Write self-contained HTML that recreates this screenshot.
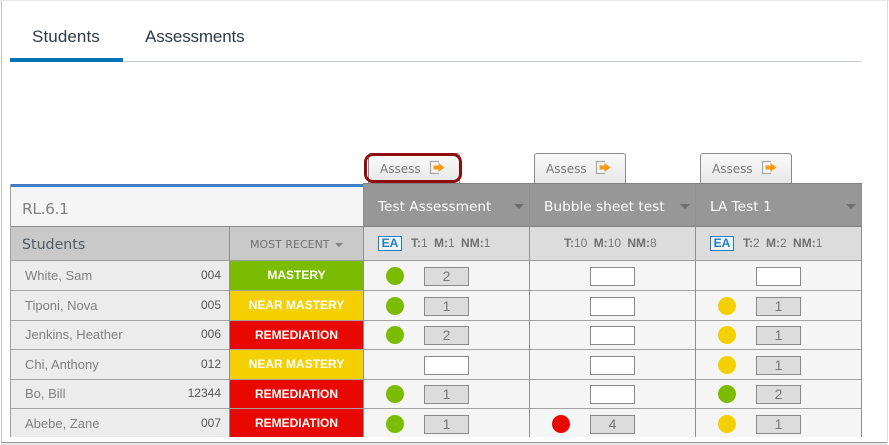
<!DOCTYPE html>
<html><head><meta charset="utf-8">
<style>
html,body{margin:0;padding:0;background:#fff}
#p{position:relative;width:889px;height:445px;overflow:hidden;background:#fff;font-family:"Liberation Sans",sans-serif}
#p div{position:absolute;box-sizing:border-box;white-space:nowrap}
.hl{height:1px;background:#a3a3a3}
.vl{width:1px;background:#8f8f8f}
.st{left:25px;width:150px;font-size:13px;color:#808080;line-height:29px}
.id{left:121px;width:100px;text-align:right;font-size:12px;color:#555;line-height:29px}
.bd{left:230px;width:133px;height:29px;line-height:29px;text-align:center;color:#fff;font-weight:bold;font-size:12px}
.g{background:#7cbc00}.y{background:#f5d000}.r{background:#e80800}
.c{width:18px;height:18px;border-radius:50%}
.b{width:45px;height:19px;border:1px solid #8a8a8a;background:#dcdcdc;text-align:center;font-size:14px;line-height:17px;color:#777}
.w{width:45px;height:19px;border:1px solid #8a8a8a;background:#fff}
.hd{top:198px;font-family:"DejaVu Sans",sans-serif;font-size:13.7px;color:#fff;line-height:18px}
.tr{width:0;height:0;border-left:5px solid transparent;border-right:5px solid transparent;border-top:5px solid #6e6e6e;top:204px}
.as{top:153px;width:92px;height:31px;border:1px solid #8a8a8a;border-bottom:0;border-radius:3px 3px 0 0;background:linear-gradient(#fafafa,#e6e6e6)}
.at{top:162px;font-family:"DejaVu Sans",sans-serif;font-size:12px;color:#777;line-height:15px}
.ea{top:236px;width:24px;height:15px;border:1px solid #1d7fc0;background:#f0f4f7;color:#1d7fc0;font-weight:bold;font-size:12px;line-height:13px;text-align:center}
.tt{top:235px;font-size:12px;line-height:17px;color:#777;word-spacing:3px}
.tt b{color:#6f6f6f}
svg{position:absolute}
</style></head><body>
<div id="p">
<!-- window frame -->
<div style="left:1px;top:0;width:1px;height:442px;background:#c4c4c4"></div>
<div style="left:0;top:0;width:889px;height:1px;background:#e8e8e8"></div>
<div style="left:1px;top:442px;width:886px;height:1px;background:#9a9a9a"></div>
<div style="left:1px;top:443px;width:886px;height:2px;background:#e8e8e8"></div>
<div style="left:887px;top:0;width:1px;height:443px;background:#dcdcdc"></div>

<!-- tabs -->
<div style="left:32px;top:26px;font-size:17px;line-height:22px;color:#2d3b45;letter-spacing:.1px">Students</div>
<div style="left:145px;top:26px;font-size:17px;line-height:22px;color:#2d3b45;letter-spacing:-.15px">Assessments</div>
<div style="left:10px;top:61px;width:852px;height:1px;background:#c7cdd1"></div>
<div style="left:10px;top:58px;width:113px;height:4px;background:#0374b5"></div>

<!-- assess buttons -->
<div class="as" style="left:368px"></div>
<div class="as" style="left:534px"></div>
<div class="as" style="left:700px"></div>
<div style="left:364px;top:153px;width:98px;height:30px;border:3.5px solid #8f0d0d;border-radius:9px"></div>
<div class="at" style="left:380px">Assess</div>
<div class="at" style="left:546px">Assess</div>
<div class="at" style="left:712px">Assess</div>
<svg style="left:429px;top:160px" width="16" height="16" viewBox="0 0 16 16"><path d="M10 1.5H1.5V13.5H10" fill="#f4f4f4" stroke="#a8a8a8" stroke-width="1.2"/><path d="M4.5 5.5H9.5V3L15.5 7.5L9.5 12V9.5H4.5Z" fill="#fb9a12"/></svg>
<svg style="left:595px;top:160px" width="16" height="16" viewBox="0 0 16 16"><path d="M10 1.5H1.5V13.5H10" fill="#f4f4f4" stroke="#a8a8a8" stroke-width="1.2"/><path d="M4.5 5.5H9.5V3L15.5 7.5L9.5 12V9.5H4.5Z" fill="#fb9a12"/></svg>
<svg style="left:761px;top:160px" width="16" height="16" viewBox="0 0 16 16"><path d="M10 1.5H1.5V13.5H10" fill="#f4f4f4" stroke="#a8a8a8" stroke-width="1.2"/><path d="M4.5 5.5H9.5V3L15.5 7.5L9.5 12V9.5H4.5Z" fill="#fb9a12"/></svg>

<!-- backgrounds -->
<div style="left:10px;top:187px;width:354px;height:40px;background:#f5f5f5"></div>
<div style="left:10px;top:184px;width:354px;height:3px;background:#3f80c8"></div>
<div style="left:10px;top:227px;width:354px;height:34px;background:#c9c9c9"></div>
<div style="left:364px;top:183px;width:498px;height:44px;background:#979797"></div>
<div style="left:364px;top:227px;width:498px;height:34px;background:#dcdcdc"></div>
<div style="left:10px;top:261px;width:220px;height:176px;background:#ececec"></div>
<div style="left:364px;top:261px;width:498px;height:176px;background:#f5f5f5"></div>

<!-- status badges -->
<div class="bd g" style="top:261px;height:30px;line-height:29px">MASTERY</div>
<div class="bd y" style="top:291px;height:29px">NEAR MASTERY</div>
<div class="bd r" style="top:320px;height:30px;padding-top:1px">REMEDIATION</div>
<div class="bd y" style="top:350px;height:29px">NEAR MASTERY</div>
<div class="bd r" style="top:379px;height:30px;padding-top:1px">REMEDIATION</div>
<div class="bd r" style="top:409px;height:28px">REMEDIATION</div>

<!-- lines -->
<div class="hl" style="left:10px;top:226px;width:354px;background:#8a8a8a"></div>
<div class="hl" style="left:10px;top:260px;width:852px;background:#9c9c9c"></div>
<div class="hl" style="left:10px;top:290px;width:852px"></div>
<div class="hl" style="left:10px;top:320px;width:852px"></div>
<div class="hl" style="left:10px;top:349px;width:852px"></div>
<div class="hl" style="left:10px;top:379px;width:852px"></div>
<div class="hl" style="left:10px;top:408px;width:852px"></div>
<div class="hl" style="left:364px;top:226px;width:498px;background:#808080"></div>
<div class="vl" style="left:10px;top:184px;height:253px;background:#a0a0a0"></div>
<div class="vl" style="left:229px;top:227px;height:210px"></div>
<div class="vl" style="left:363px;top:184px;height:253px"></div>
<div class="vl" style="left:529px;top:183px;height:254px"></div>
<div class="vl" style="left:695px;top:183px;height:254px"></div>
<div class="vl" style="left:861px;top:183px;height:254px"></div>
<div class="hl" style="left:363px;top:183px;width:499px;background:#808080"></div>

<!-- left headers -->
<div style="left:22px;top:198px;font-family:'DejaVu Sans',sans-serif;font-size:15.5px;letter-spacing:-.4px;line-height:22px;color:#808080">RL.6.1</div>
<div style="left:22px;top:235px;font-family:'DejaVu Sans',sans-serif;font-size:14.2px;line-height:20px;color:#4f5a63">Students</div>
<div style="left:250px;top:237px;font-family:'DejaVu Sans',sans-serif;font-size:11px;line-height:16px;color:#707070">MOST RECENT</div>
<div class="tr" style="left:335px;top:243px;border-left-width:4px;border-right-width:4px;border-top-width:4px;border-top-color:#808080"></div>

<!-- assessment headers -->
<div class="hd" style="left:378px">Test Assessment</div>
<div class="hd" style="left:544px">Bubble sheet test</div>
<div class="hd" style="left:710px">LA Test 1</div>
<div class="tr" style="left:514px"></div>
<div class="tr" style="left:680px"></div>
<div class="tr" style="left:846px"></div>

<!-- stats -->
<div class="ea" style="left:378px">EA</div>
<div class="tt" style="left:411px"><b>T:</b>1 <b>M:</b>1 <b>NM:</b>1</div>
<div class="tt" style="left:564px"><b>T:</b>10 <b>M:</b>10 <b>NM:</b>8</div>
<div class="ea" style="left:710px">EA</div>
<div class="tt" style="left:743px"><b>T:</b>2 <b>M:</b>2 <b>NM:</b>1</div>

<!-- students -->
<div class="st" style="top:261px">White, Sam</div><div class="id" style="top:261px">004</div>
<div class="st" style="top:291px">Tiponi, Nova</div><div class="id" style="top:291px">005</div>
<div class="st" style="top:320px">Jenkins, Heather</div><div class="id" style="top:320px">006</div>
<div class="st" style="top:350px">Chi, Anthony</div><div class="id" style="top:350px">012</div>
<div class="st" style="top:379px">Bo, Bill</div><div class="id" style="top:379px">12344</div>
<div class="st" style="top:409px">Abebe, Zane</div><div class="id" style="top:409px">007</div>

<!-- col 1 -->
<div class="c g" style="left:386px;top:267px"></div><div class="b" style="left:424px;top:267px">2</div>
<div class="c g" style="left:386px;top:297px"></div><div class="b" style="left:424px;top:297px">1</div>
<div class="c g" style="left:386px;top:326px"></div><div class="b" style="left:424px;top:326px">2</div>
<div class="w" style="left:424px;top:356px"></div>
<div class="c g" style="left:386px;top:385px"></div><div class="b" style="left:424px;top:385px">1</div>
<div class="c g" style="left:386px;top:415px"></div><div class="b" style="left:424px;top:415px">1</div>

<!-- col 2 -->
<div class="w" style="left:590px;top:267px"></div>
<div class="w" style="left:590px;top:297px"></div>
<div class="w" style="left:590px;top:326px"></div>
<div class="w" style="left:590px;top:356px"></div>
<div class="w" style="left:590px;top:385px"></div>
<div class="c r" style="left:552px;top:415px"></div><div class="b" style="left:590px;top:415px">4</div>

<!-- col 3 -->
<div class="w" style="left:756px;top:267px"></div>
<div class="c y" style="left:718px;top:297px"></div><div class="b" style="left:756px;top:297px">1</div>
<div class="c y" style="left:718px;top:326px"></div><div class="b" style="left:756px;top:326px">1</div>
<div class="c y" style="left:718px;top:356px"></div><div class="b" style="left:756px;top:356px">1</div>
<div class="c g" style="left:718px;top:385px"></div><div class="b" style="left:756px;top:385px">2</div>
<div class="c y" style="left:718px;top:415px"></div><div class="b" style="left:756px;top:415px">1</div>
</div>
</body></html>
